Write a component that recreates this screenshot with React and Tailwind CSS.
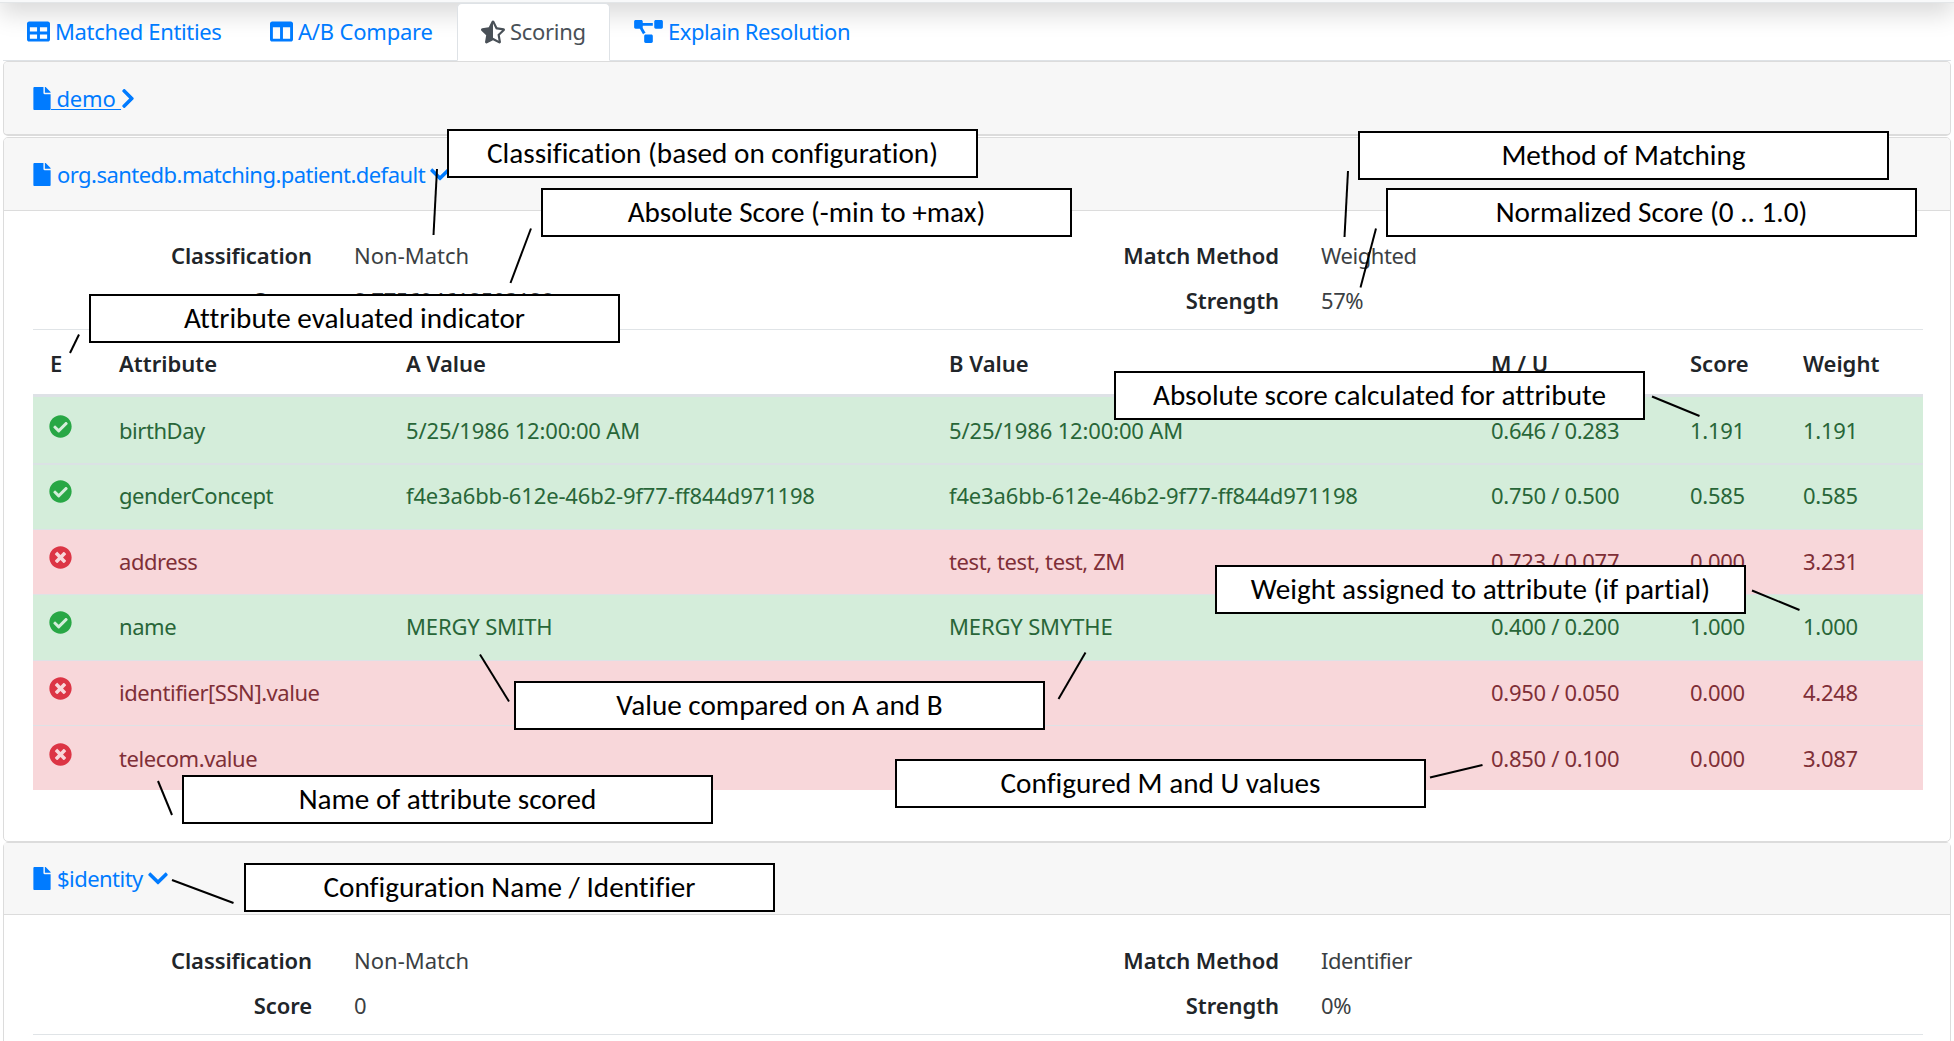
import React from "react";
import {
  FaTable,
  FaColumns,
  FaStarHalfAlt,
  FaProjectDiagram,
  FaFile,
  FaChevronRight,
  FaChevronDown,
  FaCheckCircle,
  FaTimesCircle,
} from "react-icons/fa";

function Tab({ icon, width, active, tracking, children }) {
  return (
    <a
      className={`flex h-[58px] items-center gap-[5px] border px-[23px] pb-px ${width} ${tracking} ${
        active
          ? "rounded-t-[5px] border-[#dee2e6] border-b-white bg-white text-[#495057]"
          : "border-transparent text-[#007bff]"
      }`}
    >
      <span className="flex shrink-0">{icon}</span>
      <span className="whitespace-nowrap">{children}</span>
    </a>
  );
}

function CardHeader({ name, open, height, divider }) {
  return (
    <div className={`flex items-center bg-[#f7f7f7] px-[29px] ${height} ${divider ? "border-b border-[#dcdcdc]" : ""}`}>
      <a className="flex items-center text-[#007bff]">
        <FaFile className="h-[23px] w-[18px]" />
        {open ? (
          <>
            <span className="ml-[6px] tracking-[-0.54px]">{name}</span>
            <FaChevronDown className="ml-[5px] h-[23px] w-[20px]" />
          </>
        ) : (
          <>
            <span className="whitespace-pre tracking-[-0.2px] underline decoration-1 underline-offset-2">{` ${name} `}</span>
            <FaChevronRight className="h-[23px] w-[14px]" />
          </>
        )}
      </a>
    </div>
  );
}

function Field({ label, value, tight }) {
  return (
    <div className="grid h-[45px] grid-cols-[279px_1fr] items-center gap-x-[42px]">
      <span className="text-right font-semibold tracking-[-0.08px] text-[#212529]">{label}</span>
      <span className={`text-[#3b3f43] ${tight ? "tracking-[-0.45px]" : ""}`}>{value}</span>
    </div>
  );
}

function Summary({ classification, score, method, strength }) {
  return (
    <div className="grid grid-cols-[967px_1fr] border-b border-[#e0e4e7] pb-[6px]">
      <div>
        <Field label="Classification" value={classification} />
        <Field label="Score" value={score} tight />
      </div>
      <div>
        <Field label="Match Method" value={method} tight />
        <Field label="Strength" value={strength} tight />
      </div>
    </div>
  );
}

const COLS = "grid grid-cols-[69px_287px_543px_542px_199px_113px_137px]";

const ROWS = [
  { ok: true, name: "birthDay", a: "5/25/1986 12:00:00 AM", b: "5/25/1986 12:00:00 AM", mu: "0.646 / 0.283", score: "1.191", weight: "1.191", box: "h-[66px] pt-[2px]" },
  { ok: true, name: "genderConcept", a: "f4e3a6bb-612e-46b2-9f77-ff844d971198", b: "f4e3a6bb-612e-46b2-9f77-ff844d971198", mu: "0.750 / 0.500", score: "0.585", weight: "0.585", box: "h-[66px] border-t-2 border-[#dbe2e4] pb-[2px]" },
  { ok: false, name: "address", a: "", b: "test, test, test, ZM", mu: "0.723 / 0.077", score: "0.000", weight: "3.231", box: "h-[65px] border-t border-[#dee2e6] pb-px" },
  { ok: true, name: "name", a: "MERGY SMITH", b: "MERGY SMYTHE", mu: "0.400 / 0.200", score: "1.000", weight: "1.000", box: "h-[66px] border-t border-[#dee2e6] pb-px" },
  { ok: false, name: "identifier[SSN].value", a: "", b: "", mu: "0.950 / 0.050", score: "0.000", weight: "4.248", box: "h-[65px] border-t border-[#dee2e6] pb-px" },
  { ok: false, name: "telecom.value", a: "", b: "", mu: "0.850 / 0.100", score: "0.000", weight: "3.087", box: "h-[65px] border-t border-[#dee2e6] pt-[2px]" },
];

function ScoreTable() {
  return (
    <div>
      <div className={`${COLS} h-[67px] items-center border-b-[3px] border-[#dee2e6] pt-[3px] font-semibold text-[#212529]`}>
        {["E", "Attribute", "A Value", "B Value", "M / U", "Score", "Weight"].map((h) => (
          <span key={h} className="pl-[17px]">{h}</span>
        ))}
      </div>
      {ROWS.map((r) => (
        <div
          key={r.name}
          className={`${COLS} items-center tracking-[-0.3px] ${r.box} ${
            r.ok ? "bg-[#d4edda] text-[#286638]" : "bg-[#f8d7da] text-[#7f2f37]"
          }`}
        >
          <span className="pb-[9px] pl-[16px]">
            {r.ok ? (
              <FaCheckCircle className="h-[23px] w-[23px] text-[#28a745]" />
            ) : (
              <FaTimesCircle className="h-[23px] w-[23px] text-[#dc3545]" />
            )}
          </span>
          <span className="pb-px pl-[17px] tracking-[-0.45px]">{r.name}</span>
          <span className="pb-px pl-[17px] tracking-[-0.15px]">{r.a}</span>
          <span className={`pb-px pl-[17px] ${r.ok ? "tracking-[-0.15px]" : "tracking-[-0.4px]"}`}>{r.b}</span>
          <span className="pb-px pl-[17px]">{r.mu}</span>
          <span className="pb-px pl-[17px]">{r.score}</span>
          <span className="pb-px pl-[17px]">{r.weight}</span>
        </div>
      ))}
    </div>
  );
}

const CALLOUTS = [
  ["left-[447px] top-[129px]", "Classification (based on configuration)"],
  ["left-[541px] top-[188px]", "Absolute Score (-min to +max)"],
  ["left-[1358px] top-[131px]", "Method of Matching"],
  ["left-[1386px] top-[188px]", "Normalized Score (0 .. 1.0)"],
  ["left-[89px] top-[294px]", "Attribute evaluated indicator"],
  ["left-[1114px] top-[371px]", "Absolute score calculated for attribute"],
  ["left-[1215px] top-[565px]", "Weight assigned to attribute (if partial)"],
  ["left-[514px] top-[681px]", "Value compared on A and B"],
  ["left-[895px] top-[759px]", "Configured M and U values"],
  ["left-[182px] top-[775px]", "Name of attribute scored"],
  ["left-[244px] top-[863px]", "Configuration Name / Identifier"],
];

const LEADERS = [
  [437, 169, 433.5, 235],
  [531, 228.5, 510.5, 283],
  [1348, 171, 1344.5, 237],
  [1376, 228.5, 1360.5, 287.5],
  [79, 334.5, 70, 353],
  [1652, 396.5, 1699.5, 416],
  [1752, 590.5, 1799.5, 610],
  [480, 654.5, 509, 701.5],
  [1085.5, 652.5, 1058.5, 699],
  [1430, 777.5, 1482.5, 765],
  [158, 781, 172, 815],
  [172, 880, 233.5, 903],
];

/* Explanatory notes that float above the page with leader lines. */
function Annotations() {
  return (
    <div className="absolute inset-0 z-20">
      <svg className="absolute inset-0" width="1954" height="1041" stroke="#000" strokeWidth="2">
        {LEADERS.map(([x1, y1, x2, y2]) => (
          <line key={`${x1}-${y1}`} x1={x1} y1={y1} x2={x2} y2={y2} />
        ))}
      </svg>
      {CALLOUTS.map(([pos, text]) => (
        <div
          key={text}
          className={`absolute flex h-[49px] w-[531px] items-center justify-center whitespace-nowrap border-2 border-black bg-white pt-px font-[Carlito,Calibri,sans-serif] text-[29.2px] leading-none text-black [font-variant-ligatures:none] ${pos}`}
        >
          {text}
        </div>
      ))}
    </div>
  );
}

export default function App() {
  return (
    <div className="relative h-[1041px] w-[1954px] overflow-hidden bg-white font-['Noto_Sans',sans-serif] text-[22px] leading-[33px]">
      <div className="absolute -top-[80px] left-0 h-[83px] w-[1954px] border-b border-[#e3e6e8] bg-[#f8f9fa] shadow-[0_11px_23px_rgba(0,0,0,0.15)]" />
      <main className="relative pl-[3px] pr-[3px] pt-[3px]">
        <nav className="flex h-[58px] border-b border-[#dee2e6]">
          <Tab width="w-[243px]" tracking="tracking-[-0.35px]" icon={<FaTable className="size-[23px]" />}>Matched Entities</Tab>
          <Tab width="w-[211px]" tracking="tracking-[-0.2px]" icon={<FaColumns className="size-[23px]" />}>A/B Compare</Tab>
          <Tab width="w-[153px]" tracking="tracking-[-0.3px]" active icon={<FaStarHalfAlt className="size-[24px]" />}>Scoring</Tab>
          <Tab width="w-[290px]" tracking="tracking-[-0.45px]" icon={<FaProjectDiagram className="h-[23px] w-[29px]" />}>Explain Resolution</Tab>
        </nav>

        <section className="overflow-hidden rounded-[5px] border border-b-2 border-[#dcdcdc]">
          <CardHeader name="demo" height="h-[72px] pt-px" />
        </section>

        <section className="mt-px overflow-hidden rounded-[5px] border border-[#dcdcdc]">
          <CardHeader name="org.santedb.matching.patient.default" open height="h-[73px]" divider />
          <div className="pb-[51px] pl-[29px] pr-[27px] pt-[22px]">
            <Summary classification="Non-Match" score="2.775694612503128" method="Weighted" strength="57%" />
            <ScoreTable />
          </div>
        </section>

        <section className="rounded-t-[5px] border border-[#dcdcdc]">
          <CardHeader name="$identity" open height="h-[72px] pb-px" divider />
          <div className="h-[200px] pl-[29px] pr-[27px] pt-[23px]">
            <Summary classification="Non-Match" score="0" method="Identifier" strength="0%" />
          </div>
        </section>
      </main>
      <Annotations />
    </div>
  );
}
